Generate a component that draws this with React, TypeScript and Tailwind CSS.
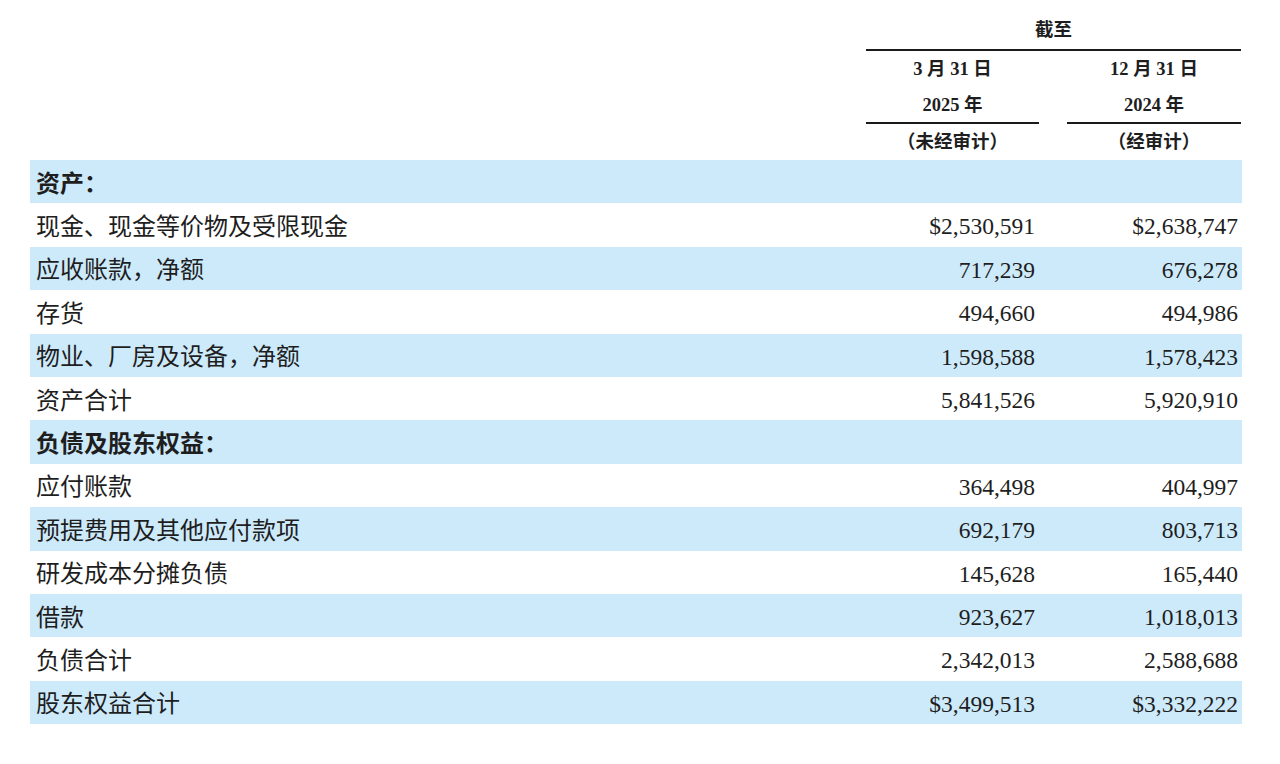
const rows: { label: string; a?: string; b?: string; head?: boolean }[] = [
  { label: "资产：", head: true },
  { label: "现金、现金等价物及受限现金", a: "$2,530,591", b: "$2,638,747" },
  { label: "应收账款，净额", a: "717,239", b: "676,278" },
  { label: "存货", a: "494,660", b: "494,986" },
  { label: "物业、厂房及设备，净额", a: "1,598,588", b: "1,578,423" },
  { label: "资产合计", a: "5,841,526", b: "5,920,910" },
  { label: "负债及股东权益：", head: true },
  { label: "应付账款", a: "364,498", b: "404,997" },
  { label: "预提费用及其他应付款项", a: "692,179", b: "803,713" },
  { label: "研发成本分摊负债", a: "145,628", b: "165,440" },
  { label: "借款", a: "923,627", b: "1,018,013" },
  { label: "负债合计", a: "2,342,013", b: "2,588,688" },
  { label: "股东权益合计", a: "$3,499,513", b: "$3,332,222" },
];

const font = { fontFamily: '"Liberation Serif", "Noto Sans CJK SC", serif' };

export default function App() {
  return (
    <div className="w-[1280px] h-[764px] bg-white text-[#1e1e1e]" style={font}>
      <div className="ml-[30px] w-[1212px]">
        {/* header */}
        <div className="flex">
          <div className="flex-1" />
          <div className="w-[375px] mr-px">
            <div className="h-[51px] flex items-end justify-center pb-[4px] text-[18.5px] font-bold border-b-2 border-[#1a1a1a]">
              截至
            </div>
            <div className="flex gap-[28px] text-[18.5px] font-bold">
              <div className="w-[173px] flex flex-col items-center">
                <div className="h-[36px] pt-[2px] flex items-center">3 月 31 日</div>
                <div className="h-[37px] pt-[3px] w-full flex items-center justify-center border-b-2 border-[#1a1a1a]">2025 年</div>
                <div className="h-[36px] pt-[2px] flex items-center">（未经审计）</div>
              </div>
              <div className="w-[174px] flex flex-col items-center">
                <div className="h-[36px] pt-[2px] flex items-center">12 月 31 日</div>
                <div className="h-[37px] pt-[3px] w-full flex items-center justify-center border-b-2 border-[#1a1a1a]">2024 年</div>
                <div className="h-[36px] pt-[2px] flex items-center">（经审计）</div>
              </div>
            </div>
          </div>
        </div>

        {/* body */}
        <div>
          {rows.map((r, i) => (
            <div
              key={r.label}
              className={`h-[43.4px] pt-[4px] flex items-center ${i % 2 === 0 ? "bg-[#cdeafb]" : "bg-white"}`}
            >
              <div className={`flex-1 pl-[6px] text-[24px] ${r.head ? "font-bold text-[22px]" : ""}`}>{r.label}</div>
              <div className="w-[173px] text-right pr-[4px] text-[23.5px]">{r.a}</div>
              <div className="w-[28px]" />
              <div className="w-[175px] text-right pr-[4px] text-[23.5px]">{r.b}</div>
            </div>
          ))}
        </div>
      </div>
    </div>
  );
}
